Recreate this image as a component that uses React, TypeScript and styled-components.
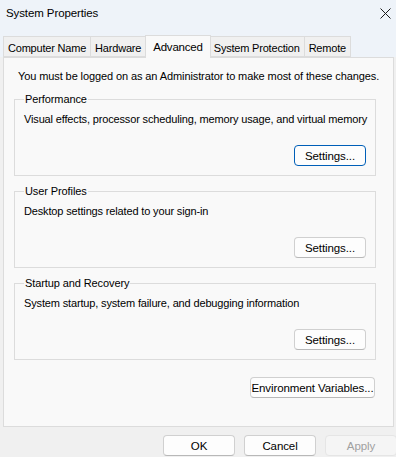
import styled, { createGlobalStyle } from "styled-components";

const GlobalStyle = createGlobalStyle`
    html, body {
        margin: 0;
        padding: 0;
        background: #f0f0f0;
    }
    * {
        box-sizing: border-box;
    }
`

const font = `"Liberation Sans", Arial, sans-serif`

type GroupPropsType = {
    title: string
    text: string
    focused?: boolean
}

const Group = (props: GroupPropsType) => {
    return (
        <GroupBox>
            <Legend>{props.title}</Legend>
            <GroupText>{props.text}</GroupText>
            <ButtonRow>
                <Button focused={props.focused}>Settings...</Button>
            </ButtonRow>
        </GroupBox>
    );
};

const tabs = ["Computer Name", "Hardware", "Advanced", "System Protection", "Remote"]

export default function App() {
    return (
        <Window>
            <GlobalStyle/>
            <TitleBar>
                <Title>System Properties</Title>
                <Close aria-label="Close">
                    <svg width="11" height="11" viewBox="0 0 11 11">
                        <path d="M0.5 0.5 L10.5 10.5 M10.5 0.5 L0.5 10.5" stroke="#1a1a1a" strokeWidth="1" fill="none"/>
                    </svg>
                </Close>
            </TitleBar>

            <TabStrip>
                {tabs.map(t => (
                    <Tab key={t} active={t === "Advanced"}>{t}</Tab>
                ))}
            </TabStrip>

            <Panel>
                <Notice>You must be logged on as an Administrator to make most of these changes.</Notice>
                <Group title="Performance"
                       text="Visual effects, processor scheduling, memory usage, and virtual memory"
                       focused/>
                <Group title="User Profiles"
                       text="Desktop settings related to your sign-in"/>
                <Group title="Startup and Recovery"
                       text="System startup, system failure, and debugging information"/>
                <EnvRow>
                    <Button wide>Environment Variables...</Button>
                </EnvRow>
            </Panel>

            <Footer>
                <Button>OK</Button>
                <Button>Cancel</Button>
                <Button disabled>Apply</Button>
            </Footer>
        </Window>
    );
}

const Window = styled.div`
    width: 396px;
    height: 457px;
    display: flex;
    flex-direction: column;
    background: #f0f0f0;
    font-family: ${font};
    font-size: 11px;
    letter-spacing: -0.1px;
    color: #000;
    overflow: hidden;
    white-space: nowrap;
`

const TitleBar = styled.div`
    height: 26px;
    display: flex;
    align-items: center;
    justify-content: space-between;
    padding: 0 3px 0 6px;
    background: #eef3f9;
`

const Title = styled.span`
    font-size: 11.5px;
    letter-spacing: -0.1px;
    color: #000;
`

const Close = styled.div`
    width: 16px;
    height: 16px;
    display: flex;
    align-items: center;
    justify-content: center;
`

const TabStrip = styled.div`
    display: flex;
    align-items: flex-end;
    height: 31px;
    padding-left: 3px;
    background: #eef3f9;
    position: relative;
    z-index: 1;
`

const Tab = styled.div<{ active?: boolean }>`
    height: ${props => props.active ? "23px" : "21px"};
    margin: ${props => props.active ? "0 -1px -1px -1px" : "0"};
    padding: ${props => props.active ? "3px 7px 0" : "2px 4px 0"};
    display: flex;
    align-items: ${props => props.active ? "flex-start" : "center"};
    line-height: 16px;
    font-size: ${props => props.active ? "11.5px" : "11px"};
    letter-spacing: -0.2px;
    background: ${props => props.active ? "#f9f9f9" : "#f0f0f0"};
    border: 1px solid #dcdcdc;
    border-bottom: ${props => props.active ? "none" : "1px solid #dcdcdc"};
    border-left: ${props => props.active ? "1px solid #dcdcdc" : "none"};
    position: relative;
    z-index: ${props => props.active ? 2 : 0};

    &:first-child {
        border-left: 1px solid #dcdcdc;
    }
`

const Panel = styled.div`
    height: 370px;
    margin: 0 2px 0 3px;
    padding: 10px 17px 0 10px;
    background: #f9f9f9;
    border: 1px solid #dcdcdc;
    display: flex;
    flex-direction: column;
`

const Notice = styled.p`
    margin: 0 0 7px 4px;
    line-height: 16px;
`

const GroupBox = styled.fieldset`
    margin: 0 0 7px;
    padding: 0 9px 9px 9px;
    border: 1px solid #dcdcdc;
    min-width: 0;
`

const Legend = styled.legend`
    padding: 0 1px;
    line-height: 16px;
`

const GroupText = styled.div`
    margin-top: 4px;
    line-height: 16px;
    letter-spacing: -0.15px;
`

const ButtonRow = styled.div`
    display: flex;
    justify-content: flex-end;
    margin-top: 18px;
`

const Button = styled.button<{ focused?: boolean, wide?: boolean }>`
    width: ${props => props.wide ? "125px" : "72px"};
    height: 21px;
    padding: 0;
    font-family: ${font};
    font-size: 11.5px;
    letter-spacing: -0.1px;
    white-space: nowrap;
    color: ${props => props.disabled ? "#a0a0a0" : "#000"};
    background: ${props => props.disabled ? "#f5f5f5" : "#fdfdfd"};
    border: 1px solid ${props => props.focused ? "#005fb8" : props.disabled ? "#e5e5e5" : "#d0d0d0"};
    border-bottom-color: ${props => props.focused ? "#005fb8" : props.disabled ? "#e5e5e5" : "#b8b8b8"};
    border-radius: 4px;
`

const EnvRow = styled.div`
    display: flex;
    justify-content: flex-end;
    margin-top: 10px;
    padding-right: 1px;
`

const Footer = styled.div`
    flex: 1;
    display: flex;
    justify-content: flex-end;
    align-items: flex-start;
    gap: 9px;
    padding: 8px 0 0 0;
    margin-right: -1px;
`
